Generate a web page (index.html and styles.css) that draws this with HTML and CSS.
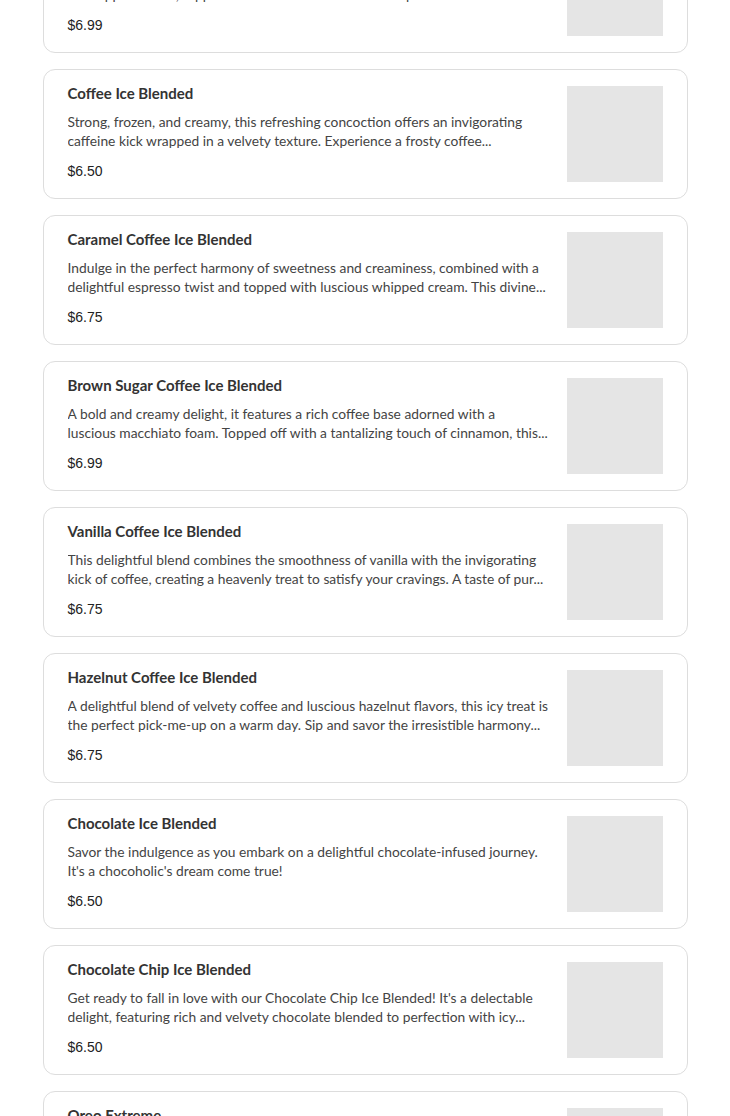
FILE: index.html
```html
<!DOCTYPE html>
<html lang="en">
<head>
    <meta charset="UTF-8">
    <meta name="viewport" content="width=device-width, initial-scale=1.0">
    <title>Ice Blended Menu</title>
    <link rel="stylesheet" href="styles.css">
</head>
<body>

<div class="menu-list">
    <!-- Menu items -->
    <div class="menu-item">
        <div class="item-info">
            <h3 class="item-title">Mocha Ice Blended</h3>
            <p class="item-desc">A rich chocolate and espresso blend crushed with ice and finished with a cloud of whipped cream, topped with chocolate drizzle and a sprinkle of cocoa for a long...</p>
            <div class="item-price">$6.99</div>
        </div>
        <div class="item-img"></div>
    </div>

    <div class="menu-item">
        <div class="item-info">
            <h3 class="item-title">Coffee Ice Blended</h3>
            <p class="item-desc">Strong, frozen, and creamy, this refreshing concoction offers an invigorating caffeine kick wrapped in a velvety texture. Experience a frosty coffee...</p>
            <div class="item-price">$6.50</div>
        </div>
        <div class="item-img"></div>
    </div>

    <div class="menu-item">
        <div class="item-info">
            <h3 class="item-title">Caramel Coffee Ice Blended</h3>
            <p class="item-desc">Indulge in the perfect harmony of sweetness and creaminess, combined with a delightful espresso twist and topped with luscious whipped cream. This divine...</p>
            <div class="item-price">$6.75</div>
        </div>
        <div class="item-img"></div>
    </div>

    <div class="menu-item">
        <div class="item-info">
            <h3 class="item-title">Brown Sugar Coffee Ice Blended</h3>
            <p class="item-desc">A bold and creamy delight, it features a rich coffee base adorned with a luscious&nbsp;macchiato foam. Topped off with a tantalizing touch of cinnamon, this...</p>
            <div class="item-price">$6.99</div>
        </div>
        <div class="item-img"></div>
    </div>

    <div class="menu-item">
        <div class="item-info">
            <h3 class="item-title">Vanilla Coffee Ice Blended</h3>
            <p class="item-desc">This delightful blend combines the smoothness of vanilla with the invigorating kick of coffee, creating a heavenly treat to satisfy your cravings. A taste of pur...</p>
            <div class="item-price">$6.75</div>
        </div>
        <div class="item-img"></div>
    </div>

    <div class="menu-item">
        <div class="item-info">
            <h3 class="item-title">Hazelnut Coffee Ice Blended</h3>
            <p class="item-desc">A delightful blend of velvety coffee and luscious hazelnut flavors, this icy treat is the perfect pick-me-up on a warm day. Sip and savor the irresistible harmony...</p>
            <div class="item-price">$6.75</div>
        </div>
        <div class="item-img"></div>
    </div>

    <div class="menu-item">
        <div class="item-info">
            <h3 class="item-title">Chocolate Ice Blended</h3>
            <p class="item-desc">Savor the indulgence as you embark on a delightful chocolate-infused journey. It's a chocoholic's dream come true!</p>
            <div class="item-price">$6.50</div>
        </div>
        <div class="item-img"></div>
    </div>

    <div class="menu-item">
        <div class="item-info">
            <h3 class="item-title">Chocolate Chip Ice Blended</h3>
            <p class="item-desc">Get ready to fall in love with our Chocolate Chip Ice Blended! It's a delectable delight, featuring rich and velvety chocolate blended to perfection with icy...</p>
            <div class="item-price">$6.50</div>
        </div>
        <div class="item-img"></div>
    </div>

    <div class="menu-item">
        <div class="item-info">
            <h3 class="item-title">Oreo Extreme</h3>
            <p class="item-desc">Crushed Oreo cookies blended with creamy milk and ice, topped with whipped cream and more cookie crumbs.</p>
            <div class="item-price">$6.99</div>
        </div>
        <div class="item-img"></div>
    </div>
</div>

</body>
</html>
```

FILE: styles.css
```css
body {
    font-family: 'Lato', sans-serif;
    margin: 0;
    padding: 0;
    background-color: #fff;
    color: #333;
    overflow: hidden;
}
.menu-list {
    max-width: 645px;
    margin: -77px auto 0;
    display: flex;
    flex-direction: column;
    gap: 16px;
}
.menu-item {
    display: flex;
    gap: 16px;
    padding: 16px 24px;
    border: 1px solid #ddd;
    border-radius: 12px;
    background: #fff;
}
.item-info {
    flex: 1;
    min-width: 0;
}
.item-title {
    margin: 0;
    font-size: 15px;
    font-weight: bold;
    line-height: 15px;
    color: #333;
}
.item-desc {
    margin: 11px 0 0;
    font-size: 13.8px;
    line-height: 19px;
    color: #444;
    display: -webkit-box;
    -webkit-line-clamp: 2;
    -webkit-box-orient: vertical;
    overflow: hidden;
}
.item-price {
    margin-top: 11px;
    font-family: 'Liberation Sans', Arial, sans-serif;
    font-size: 14px;
    line-height: 20px;
    color: #222;
}
.item-img {
    width: 96px;
    height: 96px;
    flex-shrink: 0;
    background: #e5e5e5;
}
```
